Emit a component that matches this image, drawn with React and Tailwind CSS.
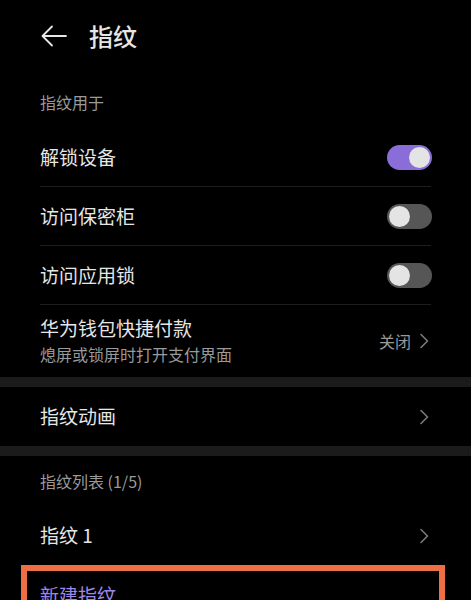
import React, { useState } from 'react';

const font = { fontFamily: '"Noto Sans CJK SC", "Noto Sans", sans-serif' };

const Toggle = ({ on, onClick }) => (
    <button
        onClick={onClick}
        className={`relative w-[45px] h-[25px] rounded-full shrink-0 ${on ? 'bg-[#8a6dd8]' : 'bg-[#565656]'}`}
    >
        <span
            className={`absolute top-[2px] w-[21px] h-[21px] rounded-full bg-[#e4e4e4] ${on ? 'left-[22px]' : 'left-[2px]'}`}
        />
    </button>
);

const Chevron = () => (
    <svg width="11" height="16" viewBox="0 0 11 16" fill="none" className="shrink-0">
        <path d="M2 1.5 L8.5 8 L2 14.5" stroke="#7a7a7a" strokeWidth="1.6" strokeLinecap="round" strokeLinejoin="round" />
    </svg>
);

const Divider = () => <div className="mx-10 h-px bg-[#1e1e1e]" />;

const App = () => {
    const [toggles, setToggles] = useState({ unlock: true, vault: false, applock: false });
    const flip = (k) => setToggles({ ...toggles, [k]: !toggles[k] });

    const switchRows = [
        { key: 'unlock', label: '解锁设备' },
        { key: 'vault', label: '访问保密柜' },
        { key: 'applock', label: '访问应用锁' },
    ];

    return (
        <div className="w-[471px] h-[600px] overflow-hidden bg-black text-[#e6e6e6]" style={font}>
            {/* header */}
            <div className="h-[75px] flex items-center pl-[41px] pb-[3px]">
                <svg width="26" height="22" viewBox="0 0 26 22" fill="none">
                    <path d="M25 11 H2 M11 1.5 L1.5 11 L11 20.5" stroke="#e6e6e6" strokeWidth="1.8" strokeLinecap="round" strokeLinejoin="round" />
                </svg>
                <div className="ml-[22px] text-[24px] font-medium leading-none">指纹</div>
            </div>

            <div className="h-[53px] flex items-center px-10 text-[16px] text-[#9a9a9a]">指纹用于</div>

            {switchRows.map((r) => (
                <div key={r.key}>
                    <div className="h-[58px] flex items-center justify-between px-10 pr-[39px]">
                        <span className="text-[19px]">{r.label}</span>
                        <Toggle on={toggles[r.key]} onClick={() => flip(r.key)} />
                    </div>
                    <Divider />
                </div>
            ))}

            <div className="h-[72px] flex items-center justify-between px-10 pr-[41px]">
                <div className="flex flex-col">
                    <span className="text-[19px] leading-[26px]">华为钱包快捷付款</span>
                    <span className="text-[16px] leading-[26px] text-[#9a9a9a]">熄屏或锁屏时打开支付界面</span>
                </div>
                <div className="flex items-center gap-[8px]">
                    <span className="text-[16px] text-[#9a9a9a]">关闭</span>
                    <Chevron />
                </div>
            </div>

            <div className="h-[10px] bg-[#1b1b1b]" />

            <div className="h-[59px] flex items-center justify-between px-10 pr-[41px]">
                <span className="text-[19px]">指纹动画</span>
                <Chevron />
            </div>

            <div className="h-[10px] bg-[#1b1b1b]" />

            <div className="h-[50px] flex items-center px-10 text-[16px] text-[#9a9a9a]">指纹列表 (1/5)</div>

            <div className="h-[59px] flex items-center justify-between px-10 pr-[41px]">
                <span className="text-[19px]">指纹 1</span>
                <Chevron />
            </div>

            <div className="ml-[21px] w-[424px] h-[60px] border-[6px] border-[#ee6e45] pl-[13px] pt-[14px]">
                <span className="block text-[19px] leading-none text-[#9d86e8]">新建指纹</span>
            </div>
        </div>
    );
};

export default App;
